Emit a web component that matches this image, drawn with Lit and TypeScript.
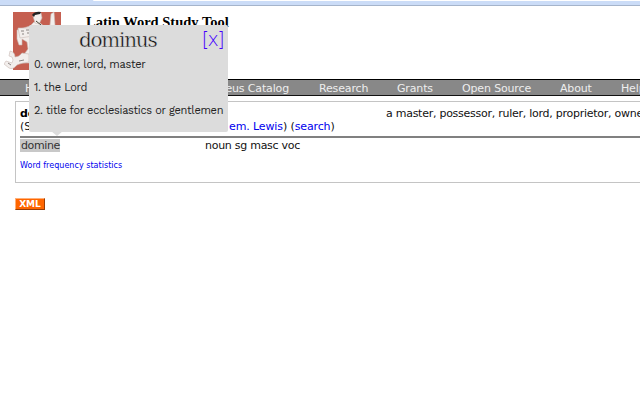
import { LitElement, html, css, svg } from "lit";
import { customElement } from "lit/decorators.js";

const NAV: [string, string][] = [
  ["Home", "home"],
  ["Collections/Texts", "texts"],
  ["Perseus Catalog", "catalog"],
  ["Research", "research"],
  ["Grants", "grants"],
  ["Open Source", "source"],
  ["About", "about"],
  ["Help", "help"],
];

const figure = svg`
  <rect x="9" y="9" width="48" height="58" fill="#c55f50"/>
  <g fill="#f2eeec" stroke="#c9bab6" stroke-width=".6" stroke-linejoin="round">
    <path d="M13 27 L26 23 L30 19 L36 20 L41 24 L46 22 L47 11 L50 9 L51 22 L48 32 L37 34 L35 48 L27 55 L26 60 L14 60 L18 54 L24 46 L23 39 L18 36 L18 42 L15 42 L13 36 Z"/>
    <path d="M6 48 Q11 49 11 54 Q15 54 18 50 L25 51 L25 59 Q17 60 13 62 Q9 67 5 65 L0 61 L2 58 L8 60 Q10 57 8 54 L5 53 Z"/>
    <path d="M29 13 Q31 9 37 10 L38 15 L35 21 L31 20 Z"/>
    <path d="M14 25 L28 25 L29 33 L16 35 Z"/>
  </g>
  <path d="M28 12 Q31 8 37 9 L36 11 L31 12 L30 14 Z" fill="#222"/>
  <path d="M32 18 L37 22" stroke="#443" stroke-width="1" fill="none"/>
  <path d="M17 28 h3 M22 27 h3 M18 31 h2 M23 30 h2 M4 60 L7 62 M15 58 L20 57" stroke="#8a8482" stroke-width="1" fill="none"/>`;

@customElement("app-root")
export class AppRoot extends LitElement {
  static styles = css`
    :host { display: block; position: relative; width: 640px; height: 400px; overflow: hidden; background: #fff;
      font: 11px/13px "DejaVu Sans", sans-serif; color: #111; white-space: nowrap; }
    .chrome { height: 5px; background: #cbdcf7; padding-left: 93px; }
    .address { height: 1px; background: #fff; border-radius: 0 0 0 2px; }
    .rule { height: 1px; background: #a5b4cb; }
    header { height: 73px; display: flex; }
    .logo { margin: -3px 0 0 4px; width: 60px; height: 68px; flex: none; }
    h1 { margin: 7px 0 0 22px; font: bold 14.5px/18px "Liberation Serif", serif; color: #000; }
    nav { height: 17px; box-sizing: border-box; border-top: 1px solid #000; border-bottom: 1px solid #111;
      background: #888; color: #eee; display: flex; gap: 30px; padding-left: 25px; line-height: 17px;
      letter-spacing: -0.15px; }
    nav span { flex: none; }
    .home { width: 31px; } .texts { width: 90px; } .catalog { width: 83px; text-align: right; direction: rtl; }
    .research { width: 48px; } .grants { width: 35px; } .source { width: 68px; } .about { width: 31px; }
    .entry { margin: 5px 0 0 15px; height: 82px; width: 640px; box-sizing: border-box; border: 1px solid #c4c4c4;
      padding: 5px 0 0 4px; }
    .head { display: flex; height: 13px; }
    .lemma { width: 366px; font-weight: bold; color: #000; }
    .gloss { letter-spacing: -0.26px; }
    .links { display: flex; height: 16px; }
    .left { width: 209px; }
    .lex { letter-spacing: -0.12px; }
    a { color: #0000ee; text-decoration: none; }
    .forms { border-top: 2px solid #808080; display: flex; padding-top: 1px; height: 13px; letter-spacing: -0.27px; }
    .form { width: 185px; }
    mark { background: #c8c8c8; color: #333; padding: 0 0 0 1px; letter-spacing: -0.4px; }
    .stats { display: block; font-size: 8px; line-height: 10px; margin-top: 9px; letter-spacing: 0.03px; }
    .xml { margin: 15px 0 0 15px; width: 30px; height: 12px; box-sizing: border-box; background: #f60;
      border: 1px solid; border-color: #ffb07a #983d05 #983d05 #ffb07a; color: #fff;
      font: bold 9px/10px "DejaVu Sans", sans-serif; text-align: center; }
    .popup { position: absolute; left: 29px; top: 25px; width: 199px; height: 107px; box-sizing: border-box;
      background: #dcdcdc; border-radius: 2px; padding: 0 5px; color: #222;
      font: 11px/23px "Work Sans", Inter, sans-serif; letter-spacing: -0.3px; }
    .popup::after { content: ""; position: absolute; left: 22px; top: 106px; border: 6px solid transparent;
      border-top: 5px solid #dcdcdc; border-bottom: 0; }
    .title { display: flex; height: 28px; }
    .word { margin-left: 45px; width: 123px; font: 20px/30px "DejaVu Serif", serif; letter-spacing: -1.25px;
      color: #111; -webkit-text-stroke: .4px #dcdcdc; }
    .close { font: 200 19px/29px "DejaVu Sans", sans-serif; color: #40f; letter-spacing: -1.6px; }
    .sense { height: 23px; }
  `;

  render() {
    return html`
      <div class="chrome"><div class="address"></div></div>
      <div class="rule"></div>
      <header>
        <svg class="logo" viewBox="0 0 60 68">${figure}</svg>
        <h1>Latin Word Study Tool</h1>
      </header>
      <nav>${NAV.map(([label, name]) => html`<span class=${name}><bdi>${label}</bdi></span>`)}</nav>
      <section class="entry">
        <div class="head"><span class="lemma">dominus</span><span class="gloss">a master, possessor, ruler, lord, proprietor, owner</span></div>
        <div class="links"><span class="left">(Show lexicon entry in</span><span class="lex"><a>em. Lewis</a>) (<a>search</a>)</span></div>
        <div class="forms"><span class="form"><mark>domine</mark></span><span class="parse">noun sg masc voc</span></div>
        <a class="stats">Word frequency statistics</a>
      </section>
      <div class="xml">XML</div>
      <aside class="popup">
        <div class="title"><span class="word">dominus</span><a class="close">[x]</a></div>
        <div class="sense">0. owner, lord, master</div>
        <div class="sense">1. the Lord</div>
        <div class="sense">2. title for ecclesiastics or gentlemen</div>
      </aside>`;
  }
}
